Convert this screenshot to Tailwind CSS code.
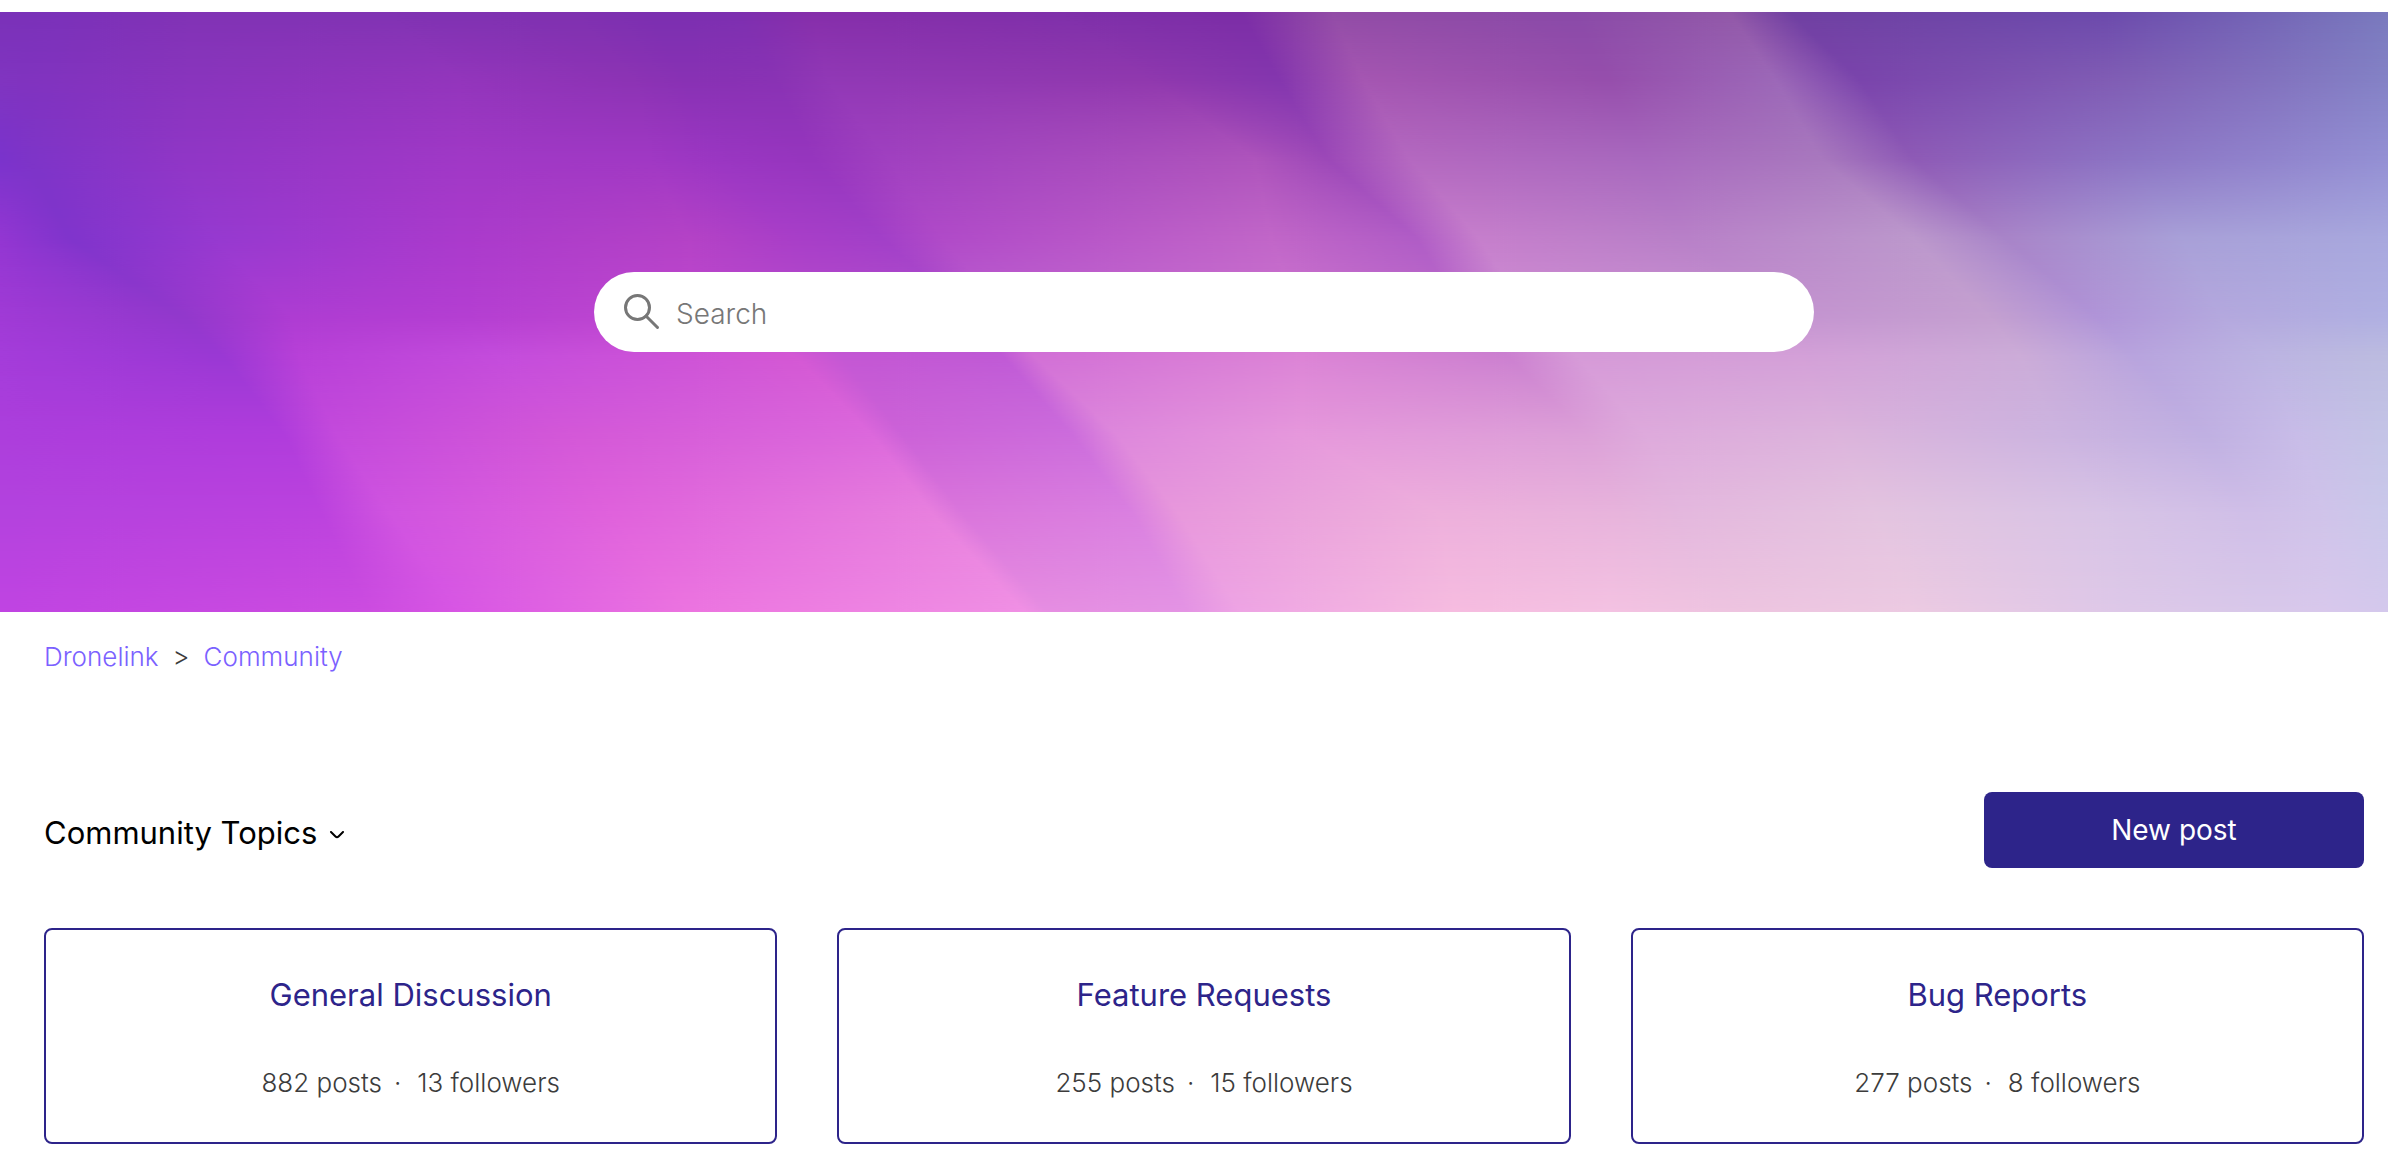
<!DOCTYPE html>
<html lang="en">
<head>
<meta charset="utf-8">
<meta name="viewport" content="width=device-width, initial-scale=1">
<title>Community Topics – Dronelink</title>
<script src="https://cdn.jsdelivr.net/npm/@tailwindcss/browser@4"></script>
</head>
<body class="bg-white pt-3 font-['Inter',sans-serif] font-light text-[#3c3c3c]">
<section class="relative flex h-[600px] items-center justify-center overflow-hidden bg-[#b850cc] pr-6 pl-11">
  <canvas id="hero" width="1200" height="600" aria-hidden="true" class="absolute inset-0 h-full w-full"></canvas>
  <form role="search" class="relative flex h-20 w-full max-w-[1220px] items-center gap-4 rounded-full bg-white pl-[30px] pr-8">
    <svg class="size-9 shrink-0" viewBox="0 0 36 36" fill="none" stroke="#777" stroke-width="3" aria-hidden="true"><circle cx="13.5" cy="13.5" r="12"/><path d="M22 22l11.5 11.5" stroke-linecap="round"/></svg>
    <input type="search" aria-label="Search" placeholder="Search" class="h-full w-full bg-transparent pt-1 text-[28px] font-light outline-none placeholder:text-[#777]">
  </form>
</section>

<main class="pr-6 pl-11">
  <nav aria-label="Breadcrumb" class="pt-[27px]">
    <ol class="flex gap-3.5 text-[26px] leading-9">
      <li><a href="#" class="text-[#7b61ff]">Dronelink</a></li>
      <li aria-hidden="true">&gt;</li>
      <li><a href="#" class="text-[#7b61ff]">Community</a></li>
    </ol>
  </nav>

  <div class="mt-[117px] flex items-center justify-between">
    <button type="button" class="flex items-center gap-3 pt-1.5 text-[31px] leading-10 font-normal text-black">Community Topics
      <svg class="mt-1 h-2 w-4" viewBox="0 0 16 8" fill="none" stroke="currentColor" stroke-width="2" stroke-linecap="round" stroke-linejoin="round" aria-hidden="true"><path d="M2 1l4.500 4.500q1.500 1.500 3 0L14 1"/></svg>
    </button>
    <button type="button" class="h-[76px] w-[380px] rounded-lg bg-[#2d248a] text-[28px] font-normal text-white">New post</button>
  </div>

  <ul class="mt-[60px] mb-6 grid grid-cols-3 gap-[60px] text-center">
    <li class="rounded-lg border-2 border-[#2d248a] pt-[45px] pb-[41px]">
      <h2 class="text-[31px] leading-10 font-normal text-[#2d248a]"><a href="#">General Discussion</a></h2>
      <p class="mt-[50px] flex justify-center text-[26px] leading-9"><span>882 posts</span><span class="pr-4 pl-3">·</span><span>13 followers</span></p>
    </li>
    <li class="rounded-lg border-2 border-[#2d248a] pt-[45px] pb-[41px]">
      <h2 class="text-[31px] leading-10 font-normal text-[#2d248a]"><a href="#">Feature Requests</a></h2>
      <p class="mt-[50px] flex justify-center text-[26px] leading-9"><span>255 posts</span><span class="pr-4 pl-3">·</span><span>15 followers</span></p>
    </li>
    <li class="rounded-lg border-2 border-[#2d248a] pt-[45px] pb-[41px]">
      <h2 class="text-[31px] leading-10 font-normal text-[#2d248a]"><a href="#">Bug Reports</a></h2>
      <p class="mt-[50px] flex justify-center text-[26px] leading-9"><span>277 posts</span><span class="pr-4 pl-3">·</span><span>8 followers</span></p>
    </li>
  </ul>
</main>

<script>
// Gradient mesh: each row is "y: x colour, x colour, ..." with nodes that follow the folds of light.
const mesh = `
30: 0 7a31b8,80 7b31b9,250 8133b5,500 8033b3,750 7f31b0,860 7b2fb0,960 7d2fb0,1060 862eaa,1380 7f30aa,1620 7c2da6,1740 924ca6,2050 8a4aa8,2260 9258a8,2340 7040a2,2750 6c4aac,3120 7a7abe
200: 0 8034c0,60 8133bf,250 8934bd,600 9335bc,830 8c33b4,900 8831b4,1010 8932b4,1080 9138b6,1500 9038ae,1670 8436ae,1780 a556b2,2100 964eac,2320 9c68b8,2430 7a44ac,2750 805cb4,3120 8482c6
400: 0 7a33cc,40 7e34c8,240 9036c6,600 a038c6,850 a038c4,940 9a36c2,1060 9635be,1160 a040c0,1640 ae54bc,1735 9c48b8,1840 b468c0,2150 a868be,2380 a878be,2500 8e5ab6,2780 8c74c4,3120 9490d4
600: 0 9336d2,90 8034cc,280 9639d0,600 aa3acc,900 b442c6,1040 a83ec8,1150 a23fc8,1230 b04ac8,1660 c166c8,1850 b05cc6,1930 c67ecc,2200 b880c8,2500 bc98cc,2620 a884c8,2850 a8a0d8,3120 a8a8de
800: 0 a03ad6,240 9238cc,380 ae3cd2,600 b43ed2,900 c048d0,1060 b84ccc,1270 b04ecc,1320 c062d0,1700 cc74d0,1910 bc6ccc,2000 ce90d4,2350 c494d0,2600 c4a0d0,2740 b094d8,2900 b4a8de,3120 b0b0e2
900: 0 a43cda,290 9a38d4,390 b840d8,650 c44cdc,1040 d458d4,1100 c457d4,1310 c05ad6,1350 d270d6,1700 dc84d6,1970 cc80d0,2060 d69ad8,2350 d4a0d8,2640 ccacd8,2790 b8a4de,2960 bcb4e2,3120 bcbce0
1100: 0 ac3edc,370 b03cdc,440 c44adc,750 d458d8,1140 dc68dc,1180 cc62d8,1400 cc6cdc,1460 de88dc,1700 e698dc,2070 dca0d8,2150 deaadc,2400 dcb4dc,2690 ccb4e0,2880 c0b0e2,3000 c8bce8,3120 c4c4e6
1300: 0 b442de,420 bc42de,510 d054e0,800 e062dc,1220 e880de,1260 da76dc,1480 da80e0,1540 e898dc,1880 eeb0dc,2110 e8b4dc,2200 e4b8de,2450 e4c4e0,2750 d8c4e6,2940 d0bfe8,3040 d0c4ea,3120 cac8ea
1548: 0 c044e2,480 cc4ce0,600 d856e4,900 ec74e0,1340 f090e4,1370 e68ee2,1550 e494e4,1620 eea4e4,1900 f6bce0,2100 f4c2e2,2250 eec4e0,2500 eccae2,2760 dec8e8,2960 d8c8ea,3040 d8c8ec,3120 d4c8ec`
  .trim().split('\n').map(line => {
    const [y, nodes] = line.split(': ');
    return { y: (y - 30) / 1518, nodes: nodes.split(',').map(n => {
      const [x, c] = n.split(' ');
      return [x / 3120, ...[0, 2, 4].map(i => parseInt(c.slice(i, i + 2), 16))];
    }) };
  });
const canvas = document.getElementById('hero'), ctx = canvas.getContext('2d');
for (let py = 0; py < canvas.height; py++) {
  const y = py / canvas.height;
  let r = 0;
  while (r < mesh.length - 2 && y >= mesh[r + 1].y) r++;
  const t = (y - mesh[r].y) / (mesh[r + 1].y - mesh[r].y);
  const g = ctx.createLinearGradient(0, 0, canvas.width, 0);
  mesh[r].nodes.forEach((a, i) => {
    const m = a.map((v, k) => v + (mesh[r + 1].nodes[i][k] - v) * t);
    g.addColorStop(Math.min(1, m[0]), `rgb(${m[1]} ${m[2]} ${m[3]})`);
  });
  ctx.fillStyle = g;
  ctx.fillRect(0, py, canvas.width, 1);
}
</script>
</body>
</html>
